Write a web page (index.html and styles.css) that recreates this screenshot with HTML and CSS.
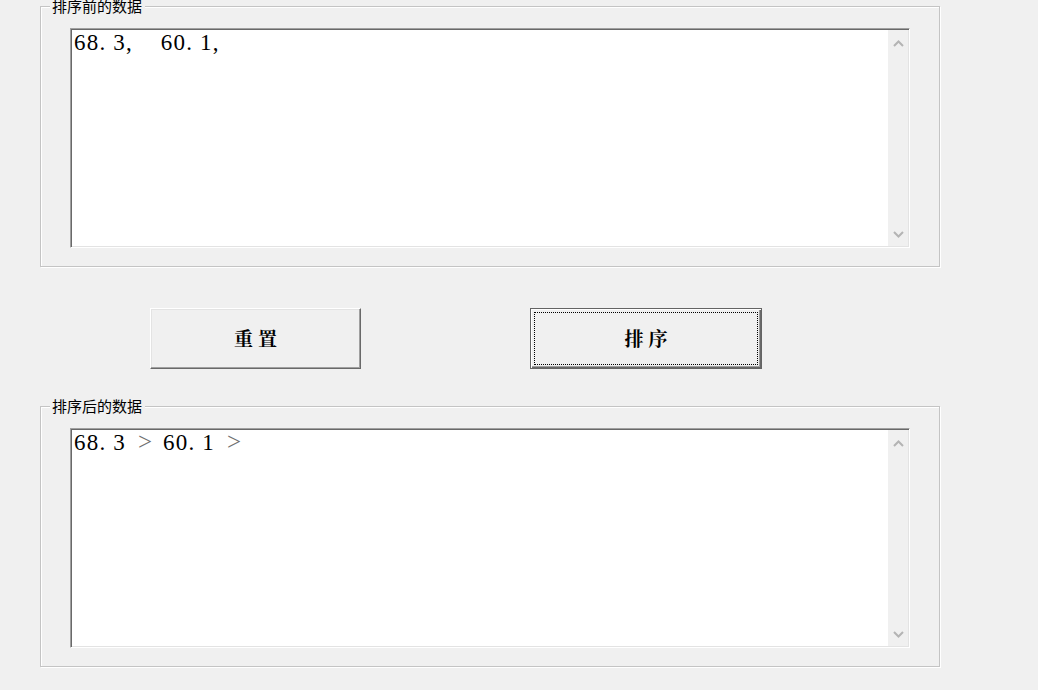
FILE: index.html
```html
<!DOCTYPE html>
<html lang="zh-CN">
<head>
    <meta charset="UTF-8">
    <meta name="viewport" content="width=device-width, initial-scale=1.0">
    <title>数据排序</title>
    <link rel="stylesheet" href="styles.css">
</head>
<body>
    <div class="window">
        <div class="group group-before">
            <span class="group-title">排序前的数据</span>
            <div class="edit">
                <div class="edit-text">68. 3,    60. 1,</div>
                <div class="scrollbar">
                    <svg class="arrow" width="11" height="7" viewBox="0 0 11 7"><path d="M1 6 L5.5 1.5 L10 6" fill="none" stroke="#b4b4b4" stroke-width="2"/></svg>
                    <svg class="arrow" width="11" height="7" viewBox="0 0 11 7"><path d="M1 1 L5.5 5.5 L10 1" fill="none" stroke="#b4b4b4" stroke-width="2"/></svg>
                </div>
            </div>
        </div>

        <div class="buttons">
            <button class="btn btn-reset">重置</button>
            <button class="btn btn-sort">排序</button>
        </div>

        <div class="group group-after">
            <span class="group-title">排序后的数据</span>
            <div class="edit">
                <div class="edit-text">68. 3 <span class="gt">&gt;</span> 60. 1 <span class="gt">&gt;</span></div>
                <div class="scrollbar">
                    <svg class="arrow" width="11" height="7" viewBox="0 0 11 7"><path d="M1 6 L5.5 1.5 L10 6" fill="none" stroke="#b4b4b4" stroke-width="2"/></svg>
                    <svg class="arrow" width="11" height="7" viewBox="0 0 11 7"><path d="M1 1 L5.5 5.5 L10 1" fill="none" stroke="#b4b4b4" stroke-width="2"/></svg>
                </div>
            </div>
        </div>
    </div>
</body>
</html>
```

FILE: styles.css
```css
body {
    margin: 0;
    background-color: #f0f0f0;
    font-family: "Noto Sans CJK SC", sans-serif;
    color: #000;
}

.window {
    padding: 6px 0 0 40px;
    height: 684px;
}

.group {
    position: relative;
    box-sizing: border-box;
    width: 900px;
    height: 261px;
    border: 1px solid #c4c4c4;
    box-shadow: inset 1px 1px 0 #fff, 1px 1px 0 #fff;
    padding: 21px 0 0 29px;
}

.group-title {
    position: absolute;
    top: -11px;
    left: 9px;
    padding: 0 3px 0 2px;
    background-color: #f0f0f0;
    font-size: 15px;
    line-height: 20px;
}

.edit {
    box-sizing: border-box;
    width: 840px;
    height: 220px;
    display: flex;
    background-color: #fff;
    border: 1px solid;
    border-color: #a0a0a0 #fff #fff #a0a0a0;
    box-shadow: inset 1px 1px 0 #696969, inset -1px -1px 0 #e3e3e3;
    padding: 1px 1px 1px 2px;
}

.edit-text {
    flex: 1;
    white-space: pre;
    font-family: "Liberation Serif", "Noto Sans CJK SC", serif;
    font-size: 23px;
    letter-spacing: 1.2px;
    line-height: 25px;
    padding-left: 1px;
}

.gt {
    font-size: 25px;
    line-height: 0;
    letter-spacing: 0;
    padding: 0 4px 0 5px;
    color: #707070;
}

.scrollbar {
    width: 20px;
    background-color: #f0f0f0;
    display: flex;
    flex-direction: column;
    justify-content: space-between;
    align-items: center;
    padding: 10px 0 8px;
}

.buttons {
    display: flex;
    padding: 41px 0 37px 110px;
    gap: 169px;
}

.btn {
    box-sizing: border-box;
    height: 61px;
    background-color: #f0f0f0;
    font-family: "Noto Serif CJK SC", "Noto Sans CJK SC", serif;
    font-weight: bold;
    font-size: 19px;
    letter-spacing: 5px;
    padding: 0 0 2px 5px;
    color: #000;
}

.btn-reset {
    width: 211px;
    border: 1px solid;
    border-color: #fff #696969 #696969 #fff;
    box-shadow: inset -1px -1px 0 #a0a0a0, inset 1px 1px 0 #e3e3e3;
}

.btn-sort {
    width: 232px;
    border: 1px solid #646464;
    box-shadow: inset 1px 1px 0 #fff, inset -1px -1px 0 #696969, inset -2px -2px 0 #a0a0a0;
    outline: 1px dotted #000;
    outline-offset: -5px;
}
```
